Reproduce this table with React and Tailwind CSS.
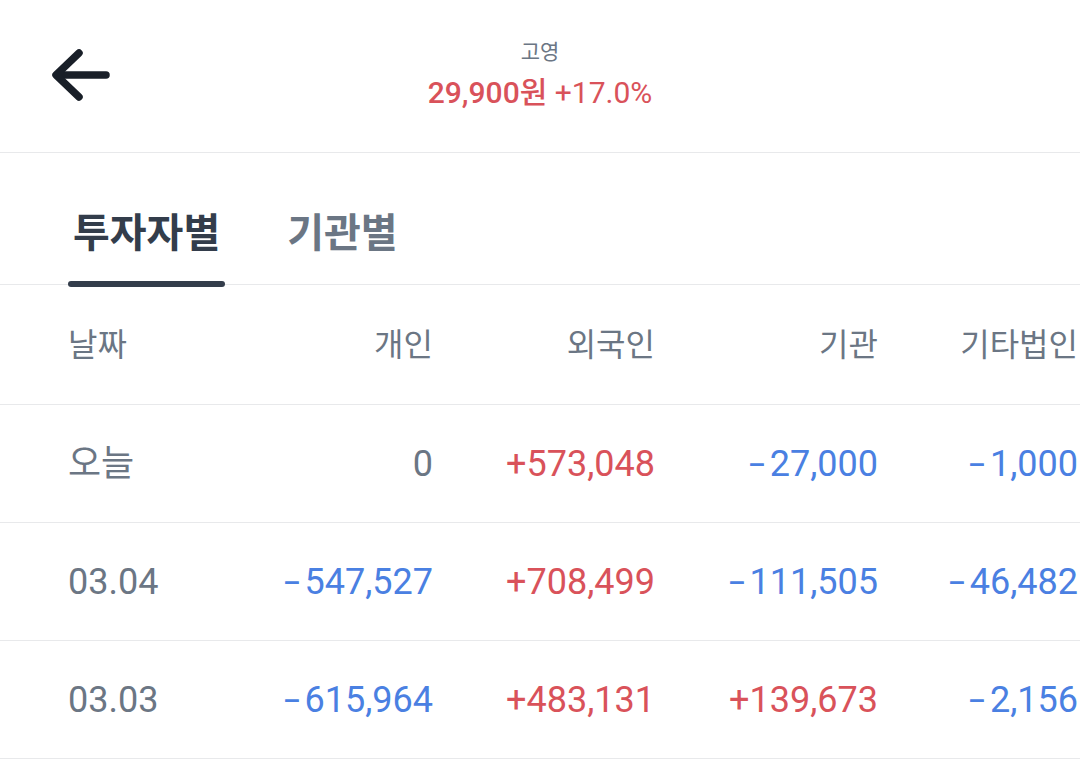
import { useState } from 'react';

const rows = [
  { date: '오늘', values: ['0', '+573,048', '-27,000', '-1,000'] },
  { date: '03.04', values: ['-547,527', '+708,499', '-111,505', '-46,482'] },
  { date: '03.03', values: ['-615,964', '+483,131', '+139,673', '-2,156'] },
];

const headers = ['개인', '외국인', '기관', '기타법인'];

function tone(v) {
  if (v.startsWith('+')) return 'text-[#d9525a]';
  if (v.startsWith('-')) return 'text-[#4a80e2]';
  return 'text-[#6b7684]';
}

// minus sign in the reference is wide with a gap after it
function Amount({ v }) {
  if (!v.startsWith('-')) return v;
  return (
    <>
      <span className="inline-block w-[21px] origin-left scale-x-[1.6] text-left">-</span>
      {v.slice(1)}
    </>
  );
}

export default function App() {
  const [tab, setTab] = useState(0);

  return (
    <div className="w-[1080px] h-[762px] overflow-hidden bg-white font-['Roboto','Noto_Sans_CJK_KR',sans-serif]">
      {/* Top bar */}
      <div className="relative flex h-[153px] items-center justify-center border-b border-[#e8e9eb]">
        <button className="absolute left-[52px] top-[48px] text-[#191f28]">
          <svg width="58" height="56" viewBox="0 0 58 56" fill="none" stroke="currentColor" strokeWidth="7.5" strokeLinecap="round" strokeLinejoin="round">
            <path d="M54 27H5" />
            <path d="M27 5L4 27l23 22" />
          </svg>
        </button>
        <div className="-mt-[6px] flex flex-col items-center">
          <span className="text-[21px] leading-[30px] text-[#6b7684]">고영</span>
          <span className="mt-[9px] text-[30px] leading-[34px] text-[#d9525a]">
            <span className="font-medium">29,900원</span> +17.0%
          </span>
        </div>
      </div>

      {/* Tabs */}
      <div className="flex h-[132px] items-end gap-[57px] border-b border-[#e8e9eb] pl-[68px]">
        {['투자자별', '기관별'].map((t, i) => (
          <button
            key={t}
            onClick={() => setTab(i)}
            className={`relative h-full text-[40px] font-bold ${tab === i ? 'text-[#333d4b]' : 'text-[#6b7684]'}`}
          >
            <span className="block px-[5px] pt-[31px] leading-[50px]">{t}</span>
            {tab === i && <span className="absolute bottom-[-3px] left-0 right-0 h-[6px] rounded-full bg-[#333d4b]" />}
          </button>
        ))}
      </div>

      {/* Table */}
      <div>
        <div className="grid h-[120px] grid-cols-[143px_222px_222px_223px_200px] items-center border-b border-[#e8e9eb] pl-[68px] text-[32px] text-[#6b7684]">
          <span>날짜</span>
          {headers.map((h) => (
            <span key={h} className="whitespace-nowrap text-right">{h}</span>
          ))}
        </div>
        {rows.map((r) => (
          <div
            key={r.date}
            className="grid h-[118px] grid-cols-[143px_222px_222px_223px_200px] items-center border-b border-[#e8e9eb] pl-[68px] text-[36px]"
          >
            <span className="text-[#6b7684]">{r.date}</span>
            {r.values.map((v, i) => (
              <span key={i} className={`whitespace-nowrap text-right ${tone(v)}`}>
                <Amount v={v} />
              </span>
            ))}
          </div>
        ))}
      </div>
    </div>
  );
}
